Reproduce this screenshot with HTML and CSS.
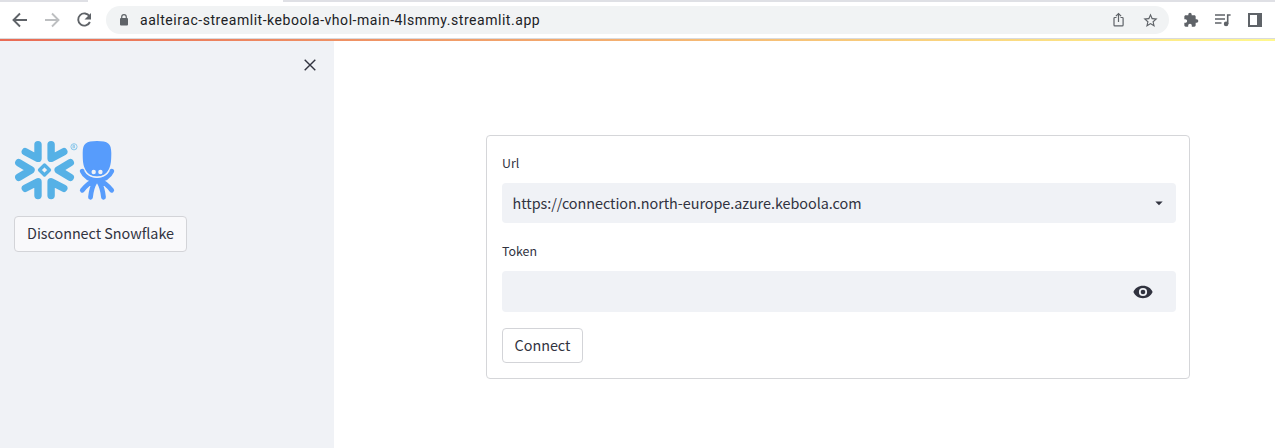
FILE: index.html
```html
<!DOCTYPE html>
<html lang="en">
<head>
<meta charset="utf-8">
<title>Streamlit</title>
<link rel="stylesheet" href="styles.css">
</head>
<body>
<header class="browser">
  <div class="tabstrip"><span class="tab-left"></span><span class="tab-active"></span><span class="tab-rest"></span></div>
  <div class="toolbar">
    <svg class="nav-icon" viewBox="0 0 20 20"><path d="M17 10H4M10 3.5L3.5 10L10 16.5" fill="none" stroke="#5f6368" stroke-width="1.9"/></svg>
    <svg class="nav-icon" viewBox="0 0 20 20"><path d="M3 10H16M10 3.5L16.500 10L10 16.500" fill="none" stroke="#bdbfc1" stroke-width="1.9"/></svg>
    <svg class="nav-icon" viewBox="0 0 20 20"><path d="M15.500 6.300A6.100 6.100 0 1 0 15.900 12" fill="none" stroke="#5f6368" stroke-width="1.900"/><path d="M17 3v6.500h-6.500z" fill="#5f6368"/></svg>
    <div class="address">
      <svg class="lock" viewBox="0 0 10 12"><rect x="1" y="4" width="8" height="7.500" rx="1" fill="#5f6368"/><path d="M2.700 5V2.900a2.300 2.300 0 0 1 4.600 0V5" fill="none" stroke="#5f6368" stroke-width="1.200"/></svg>
      <span class="address-text">aalteirac-streamlit-keboola-vhol-main-4lsmmy.streamlit.app</span>
      <svg class="share" viewBox="0 0 14 16"><path d="M4.500 5.500H2.800Q2 5.500 2 6.300V13Q2 13.900 2.800 13.900H10.200Q11.100 13.900 11.100 13V6.300Q11.100 5.500 10.200 5.500H8.500M6.500 10V1.800M3.900 4.100L6.500 1.500L9.100 4.100" fill="none" stroke="#5f6368" stroke-width="1.200"/></svg>
      <svg class="star" viewBox="0 0 24 24"><path fill="#5f6368" d="M22 9.240l-7.190-.620L12 2 9.190 8.630 2 9.240l5.460 4.730L5.820 21 12 17.270 18.180 21l-1.630-7.030L22 9.240zM12 15.400l-3.760 2.270 1-4.280-3.320-2.880 4.380-.380L12 6.100l1.710 4.040 4.380.380-3.320 2.880 1 4.280L12 15.400z"/></svg>
    </div>
    <svg class="puzzle" viewBox="0 0 24 24"><path fill="#5f6368" d="M20.500 11H19V7c0-1.100-.9-2-2-2h-4V3.500a2.500 2.500 0 0 0-5 0V5H4c-1.100 0-1.990.9-1.990 2v3.800H3.500c1.490 0 2.700 1.210 2.700 2.700s-1.210 2.700-2.700 2.700H2V20c0 1.100.9 2 2 2h3.800v-1.500c0-1.490 1.210-2.700 2.700-2.700s2.700 1.210 2.700 2.700V22H17c1.100 0 2-.9 2-2v-4h1.500a2.500 2.500 0 0 0 0-5z"/></svg>
    <svg class="media" viewBox="0 0 18 16"><path d="M1 3H11M1 7H11M1 11H7.500" stroke="#5f6368" stroke-width="1.600"/><path d="M13.700 12V3H16.600" fill="none" stroke="#5f6368" stroke-width="1.600"/><circle cx="12.100" cy="11.900" r="2.300" fill="#5f6368"/></svg>
    <svg class="panel" viewBox="0 0 14 14"><path fill="#5f6368" fill-rule="evenodd" d="M0 0H14V14H0zM2 2V12H9V2z"/></svg>
  </div>
</header>
<div class="decoration"></div>
<div class="app">
  <aside class="sidebar">
    <svg class="close" viewBox="0 0 12 12"><path d="M.7.7L11.300 11.300M11.300.7L.7 11.300" stroke="#31333f" stroke-width="1.400"/></svg>
    <svg class="logos" viewBox="14 140 102 61">
      <g fill="none" stroke="#56b1e6" stroke-width="7.400" stroke-linecap="round" stroke-linejoin="round">
        <path d="M38 144.600V158.400L25.300 151.700M51.100 144.600V158.400L63.800 151.700M38 195.500V181.700L25.300 188.300M51.100 195.500V181.700L63.800 188.300M18.800 162.700L31 170L18.800 177.300M70.300 162.700L58.200 170L70.300 177.300"/>
        <path d="M44.500 165L49.500 170L44.500 175L39.500 170z" stroke-width="3.300"/>
      </g>
      <circle cx="74" cy="146.800" r="3.100" fill="none" stroke="#7fc3ea" stroke-width=".9"/>
      <path d="M73 148.500V145.200H74.300Q75.300 146.100 74.200 147H73M74.200 147L75.200 148.500" fill="none" stroke="#7fc3ea" stroke-width=".8"/>
      <g fill="none" stroke="#579cfc" stroke-width="4.800" stroke-linecap="round">
        <path d="M82.300 171.200Q86 179.400 97 180.200Q108 179.400 111.700 171.200M94 181Q88.500 182.500 82.300 190.300M95 182Q91.500 187.500 90.500 197.300M99 182Q102.500 187.500 103.500 197.300M100 181Q105.500 182.500 111.700 190.300"/>
      </g>
      <path d="M97 141C108 141 111.300 143.500 111.300 153C111.300 160 111 164 109.400 168C107.200 173.800 102.500 176.500 97 176.500C91.500 176.500 86.800 173.800 84.600 168C83 164 82.700 160 82.700 153C82.700 143.500 86 141 97 141z" fill="#579cfc"/>
      <path d="M84.600 170.500Q88.500 177.400 97 177.400Q105.500 177.400 109.400 170.500" fill="none" stroke="#f0f2f6" stroke-width="1.100"/>
      <circle cx="93.700" cy="172" r="2.200" fill="#f0f2f6"/><circle cx="100.400" cy="172" r="2.200" fill="#f0f2f6"/>
    </svg>
    <button class="button disconnect"><span>Disconnect Snowflake</span></button>
  </aside>
  <main class="main">
    <form class="form">
      <label class="label">Url</label>
      <div class="field select"><span class="value">https://connection.north-europe.azure.keboola.com</span><svg class="caret" viewBox="0 0 8 5"><path d="M.3.5H7.700L4 4.300z" fill="#31333f"/></svg></div>
      <label class="label token">Token</label>
      <div class="field password"><svg class="eye" viewBox="0 0 20 14"><path fill="#31333f" fill-rule="evenodd" d="M10 .8C5.500 .8 1.900 3.300.4 7C1.900 10.700 5.500 13.200 10 13.200S18.100 10.700 19.600 7C18.100 3.300 14.500.8 10 .8zM10 2.900A4.100 4.100 0 1 1 10 11.100A4.100 4.100 0 1 1 10 2.900z"/><circle cx="10" cy="7" r="2.300" fill="#31333f"/></svg></div>
      <button type="button" class="button connect"><span>Connect</span></button>
    </form>
  </main>
</div>
</body>
</html>
```
FILE: styles.css
```css
* { box-sizing: border-box; }
body { margin: 0; height: 448px; overflow: hidden; background: #fff; color: #31333f; font-family: "Noto Sans CJK SC", "Noto Sans", sans-serif; }
svg { display: block; flex: none; }
.browser { height: 39px; border-bottom: 1px solid #d9dadd; }
.tabstrip { display: flex; height: 2px; }
.tab-left { width: 88px; background: #dfe0e5; }
.tab-active { width: 195px; }
.tab-rest { flex: 1; background: #dfe0e5; }
.toolbar { display: flex; align-items: center; height: 36px; padding: 0 13px 0 10px; }
.nav-icon { width: 20px; height: 20px; margin-right: 12px; }
.address { display: flex; align-items: center; width: 1063px; height: 28px; padding: 0 10px 0 13px; border-radius: 14px; background: #f1f3f4; }
.lock { width: 10px; height: 12px; }
.address-text { margin-left: 11px; font: 14px/20px Roboto, sans-serif; color: #202124; letter-spacing: 0.54px; white-space: nowrap; }
.share { width: 14px; height: 16px; margin-left: auto; }
.star { width: 17px; height: 17px; margin-left: 16px; }
.puzzle { width: 16px; height: 16px; margin-left: 14px; }
.media { width: 18px; height: 16px; margin-left: 15px; }
.panel { width: 14px; height: 14px; margin-left: auto; }
.decoration { height: 2px; background: linear-gradient(90deg, #e96b55, #fff88e); }
.app { display: flex; height: 407px; }
.sidebar { width: 334px; padding: 18px 18px 0 14px; background: #f0f2f6; }
.close { width: 12px; height: 12px; margin-left: auto; }
.logos { width: 102px; height: 61px; margin-top: 69px; }
.button { display: flex; align-items: center; justify-content: center; padding: 0 0 2px; border: 1px solid #d3d4d8; border-radius: 4px; background: #fff; color: #31333f; font-family: inherit; font-size: 14.4px; line-height: 20px; letter-spacing: -0.04px; white-space: nowrap; }
.disconnect { width: 173px; height: 36px; margin-top: 15px; background: #f9f9fb; }
.connect { width: 81px; height: 35px; margin-top: 16px; }
.main { flex: 1; padding: 94px 85px 0 152px; }
.form { width: 704px; height: 244px; padding: 17px 13px 0 15px; border: 1px solid #d5d6d9; border-radius: 4px; }
.label { display: block; height: 20px; font-size: 12.4px; line-height: 20px; }
.token { margin-top: 18px; }
.field { display: flex; align-items: center; border-radius: 4px; background: #f0f2f6; }
.select { height: 40px; margin-top: 10px; padding: 0 13px 0 10.500px; }
.value { font-size: 14.4px; line-height: 20px; letter-spacing: -0.04px; white-space: nowrap; }
.caret { width: 8px; height: 5px; margin-left: auto; }
.password { height: 41px; margin-top: 10px; padding-right: 23px; }
.eye { width: 20px; height: 14px; margin-left: auto; }
```
